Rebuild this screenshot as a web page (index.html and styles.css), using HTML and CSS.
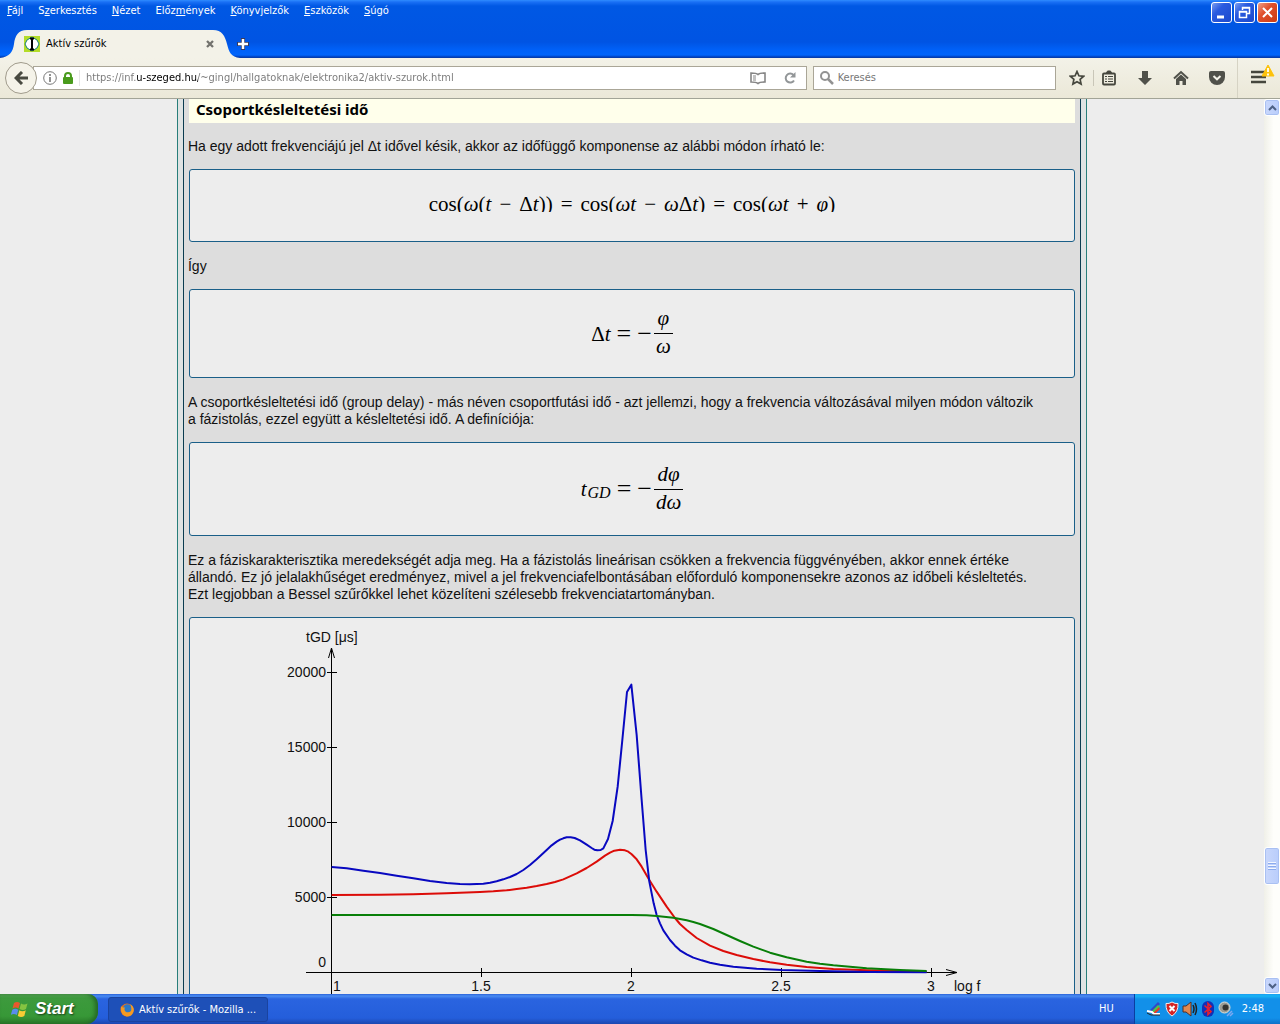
FILE: index.html
```html
<!DOCTYPE html>
<html lang="hu">
<head>
<meta charset="utf-8">
<title>Aktív szűrők</title>
<link rel="stylesheet" href="styles.css">
</head>
<body>
<header class="titlebar">
  <div class="title-row">
    <nav class="menu">
      <button><u>F</u>ájl</button><button>S<u>z</u>erkesztés</button><button><u>N</u>ézet</button><button>Előz<u>m</u>ények</button><button><u>K</u>önyvjelzők</button><button><u>E</u>szközök</button><button><u>S</u>úgó</button>
    </nav>
    <div class="window-buttons">
      <button class="win" aria-label="Kis méret"><svg width="19" height="19"><path d="M5 14h7" stroke="#fff" stroke-width="3"/></svg></button>
      <button class="win" aria-label="Előző méret"><svg width="19" height="19" fill="none" stroke="#fff"><path d="M7.500 7V4.500h7v6H12M7 5h8M4.500 8.500h7v6h-7zM4 9h8" stroke-width="1.500"/></svg></button>
      <button class="win win-close" aria-label="Bezárás"><svg width="19" height="19"><path d="M5 5l9 9M14 5l-9 9" stroke="#fff" stroke-width="2"/></svg></button>
    </div>
  </div>
  <div class="tabs">
    <div class="tab">
      <svg class="tab-shape" width="240" height="28" viewBox="0 0 240 28"><path d="M0 28C9 27 13 22 14 14S18 0 27 0H213C222 0 225 6 227 14S231 27 240 28Z" fill="#f3f2e8"/></svg>
      <svg class="favicon" width="16" height="16"><path fill="#b4dc28" d="M0 0h16v16H0z"/><path d="M8 1l5 3 2 4-2 4-5 3-5-3-2-4 2-4z" fill="#fff" stroke="#187f78"/><path d="M6 2.500h4M8 2v12M6 13.500h4" stroke="#000" stroke-width="2"/></svg>
      <span class="tab-title">Aktív szűrők</span>
      <button class="icon-button" aria-label="Lap bezárása"><svg width="8" height="8"><path d="M1 1l6 6M7 1L1 7" stroke="#72726d" stroke-width="2.300"/></svg></button>
    </div>
    <button class="icon-button new-tab" aria-label="Új lap"><svg width="12" height="12"><path d="M6 0v12M0 6h12" stroke="#383b5c" stroke-width="4"/><path d="M6 1v10M1 6h10" stroke="#fff" stroke-width="2.500"/></svg></button>
  </div>
</header>

<div class="toolbar">
  <button class="back" aria-label="Vissza"><svg width="14" height="14" fill="none" stroke="#494a41" stroke-width="3"><path d="M8 1L2 7l6 6M2 7h12"/></svg></button>
  <div class="url-box">
    <svg width="14" height="14"><circle cx="7" cy="7" r="6.300" fill="none" stroke="#777"/><path d="M7 3v2M7 6v5" stroke="#777" stroke-width="1.600"/></svg>
    <svg width="10" height="12"><path d="M2 6V4a3 3 0 016 0v2" fill="none" stroke="#4a9b1d" stroke-width="2"/><rect y="5" width="10" height="7" rx="1" fill="#4a9b1d"/></svg>
    <input class="url" aria-label="Webcím" value="https://inf.u-szeged.hu/~gingl/hallgatoknak/elektronika2/aktiv-szurok.html">
    <button class="icon-button" aria-label="Olvasó nézet"><svg width="16" height="13" fill="none" stroke="#858585" stroke-width="1.600"><path d="M8 2.500C6.500 1 4 1 1 1v9c3 0 5.500 0 7 1.500C9.500 10 12 10 15 10V1c-3 0-5.500 0-7 1.500z"/><path d="M3 4h3M3 6h3M3 8h3" stroke-width="1"/></svg></button>
    <button class="icon-button reload" aria-label="Frissítés"><svg width="12" height="12" fill="none" stroke="#929698" stroke-width="2"><path d="M10 8.500A4.500 4.500 0 119.500 3"/><path d="M11.500 0v5.500H6" fill="#929698" stroke="none"/></svg></button>
  </div>
  <label class="search-box">
    <svg width="14" height="14" fill="none" stroke="#929292" stroke-width="2"><circle cx="5" cy="5" r="4"/><path d="M8 8l5 5" stroke-width="2.500"/></svg>
    <input placeholder="Keresés" aria-label="Keresés">
  </label>
  <div class="tools">
    <button class="icon-button" aria-label="Könyvjelző"><svg width="16" height="16"><path d="M8 1.500l1.900 4.300 4.700.5-3.500 3.100 1 4.700L8 11.700l-4.100 2.400 1-4.700L1.400 6.300l4.700-.5z" fill="none" stroke="#46473e" stroke-width="1.700"/></svg></button>
    <button class="icon-button divided" aria-label="Könyvjelzők listája"><svg width="16" height="16" fill="none" stroke="#46473e"><rect x="2" y="3.500" width="12" height="11" rx="1" stroke-width="1.800"/><path d="M5.500 3L6.500 1h3l1 2z" fill="#46473e"/><path d="M4 6.500h2m1 0h5M4 9h2m1 0h5M4 11.500h2m1 0h5" stroke-width="1.200"/></svg></button>
    <button class="icon-button" aria-label="Letöltések"><svg width="16" height="16"><path d="M5 1h6v7h4l-7 7-7-7h4z" fill="#50514a"/></svg></button>
    <button class="icon-button" aria-label="Kezdőlap"><svg width="16" height="16"><path d="M1 8.500L8 2l7 6.500" fill="none" stroke="#50514a" stroke-width="2"/><path d="M3 9l5-4.500L13 9v6H9.500v-4h-3v4H3z" fill="#50514a"/></svg></button>
    <button class="icon-button" aria-label="Pocket"><svg width="16" height="16"><path d="M2 1h12q2 0 2 2v4a8 8 0 01-16 0V3q0-2 2-2z" fill="#50514a"/><path d="M4.500 6L8 9.300 11.500 6" fill="none" stroke="#f3f2e8" stroke-width="2"/></svg></button>
  </div>
  <button class="icon-button main-menu" aria-label="Menü"><svg width="28" height="22"><path d="M3 8h15M3 13h15M3 18h15" stroke="#46473e" stroke-width="2.600"/><path d="M20 1l6 11H14z" fill="#fdc20c" stroke="#fdc20c" stroke-linejoin="round"/><path d="M20 4v4M20 9.500v2" stroke="#fff" stroke-width="1.800"/></svg></button>
</div>

<div class="viewport">
  <main class="document">
    <div class="frame">
    <article class="sheet">
      <h2>Csoportkésleltetési idő</h2>
      <p>Ha egy adott frekvenciájú jel Δt idővel késik, akkor az időfüggő komponense az alábbi módon írható le:</p>
      <div class="box formula formula-line"><div class="math clipped">cos(<i>ω</i>(<i>t</i><b>−</b>Δ<i>t</i>))<b>=</b>cos(<i>ωt</i><b>−</b><i>ω</i>Δ<i>t</i>)<b>=</b>cos(<i>ωt</i><b>+</b><i>φ</i>)</div></div>
      <p>Így</p>
      <div class="box formula formula-short"><div class="math">Δ<i>t</i><b>=</b><b class="sign">−</b><span class="fraction"><i>φ</i><i>ω</i></span></div></div>
      <p>A csoportkésleltetési idő (group delay) - más néven csoportfutási idő - azt jellemzi, hogy a frekvencia változásával milyen módon változik<br>a fázistolás, ezzel együtt a késleltetési idő. A definíciója:</p>
      <div class="box formula formula-tall"><div class="math"><i>t</i><sub>GD</sub><b>=</b><b class="sign">−</b><span class="fraction"><i>dφ</i><i>dω</i></span></div></div>
      <p>Ez a fáziskarakterisztika meredekségét adja meg. Ha a fázistolás lineárisan csökken a frekvencia függvényében, akkor ennek értéke<br>állandó. Ez jó jelalakhűséget eredményez, mivel a jel frekvenciafelbontásában előforduló komponensekre azonos az időbeli késleltetés.<br>Ezt legjobban a Bessel szűrőkkel lehet közelíteni szélesebb frekvenciatartományban.</p>
      <div class="box chart">
        <svg width="700" height="400" viewBox="282 618 700 400" role="img" aria-label="Csoportkésleltetési idő a frekvencia függvényében">
          <path class="axis" d="M331.500 1010V648M328.500 658l3-10 3 10M306 972.500H957M946 969.500l11 3-11 3M327 672.500h10M327 747.500h10M327 822.500h10M327 897.500h10M481.500 968v9M631.500 968v9M781.500 968v9M931.500 968v9"/>
          <g class="labels">
            <text x="306" y="642">tGD [μs]</text>
            <g text-anchor="end"><text x="326" y="677">20000</text><text x="326" y="752">15000</text><text x="326" y="827">10000</text><text x="326" y="902">5000</text><text x="326" y="967">0</text></g>
            <text x="333" y="991">1</text>
            <g text-anchor="middle"><text x="481" y="991">1.5</text><text x="631" y="991">2</text><text x="781" y="991">2.5</text><text x="931" y="991">3</text></g>
            <text x="954" y="991">log f</text>
          </g>
          <g class="curves" transform="translate(280 620) scale(.33333)">
            <polyline stroke="#dc0c08" points="155,825 300,824 400,823 500,820 600,816 640,814 680,811 710,807 740,803 770,798 800,792 825,786 850,778 890,760 920,744 950,725 975,707 990,698 1003,692 1020,689 1035,691 1045,695 1055,703 1070,718 1085,740 1108,780 1130,815 1160,860 1185,894 1200,912 1220,930 1250,954 1290,977 1330,993 1370,1005 1420,1017 1470,1027 1520,1034 1580,1041 1660,1047 1760,1051 1940,1055"/>
            <polyline stroke="#0808c0" points="155,741 200,745 250,752 300,759 350,767 400,775 450,783 500,789 540,792 570,793 610,791 630,788 650,784 670,778 690,771 710,762 730,750 750,735 770,718 800,690 815,676 830,665 840,659 850,655 860,652 872,652 884,654 900,661 920,674 935,684 943,689 952,691 962,690 970,685 984,657 998,603 1013,500 1027,360 1041,216 1054,194 1070,345 1085,540 1097,690 1108,785 1121,850 1130,885 1140,910 1150,931 1170,960 1185,977 1200,991 1220,1003 1240,1013 1265,1021 1290,1028 1320,1034 1360,1040 1430,1046 1505,1050 1620,1053 1770,1056 1940,1057"/>
            <polyline stroke="#087f08" points="155,885 1055,885 1100,886 1130,888 1180,893 1220,901 1240,906 1260,912 1300,927 1340,945 1380,963 1420,980 1470,998 1520,1012 1580,1025 1620,1031 1660,1036 1760,1045 1860,1050 1940,1053"/>
          </g>
        </svg>
      </div>
    </article>
    </div>
  </main>
  <div class="scrollbar">
    <button class="scroll-part" aria-label="Fel"><svg width="9" height="6"><path d="M1 5l3.500-3.500L8 5" fill="none" stroke="#4d6185" stroke-width="2"/></svg></button>
    <span class="space-before"></span>
    <div class="scroll-part thumb"><svg width="8" height="9"><path d="M0 .5h8M0 3.500h8M0 6.500h8" stroke="#f4f7ff"/><path d="M0 1.500h8M0 4.500h8M0 7.500h8" stroke="#8cabee"/></svg></div>
    <span class="space-after"></span>
    <button class="scroll-part" aria-label="Le"><svg width="9" height="6"><path d="M1 1l3.500 3.500L8 1" fill="none" stroke="#4d6185" stroke-width="2"/></svg></button>
  </div>
</div>

<footer class="taskbar">
  <button class="start">
    <svg width="18" height="18"><path d="M3 3q3-2 6 0L7.500 8.500q-3-2-6 0z" fill="#e8582d"/><path d="M10 3.500q3 2 6.500 0L15 9q-3 2-6.500 0z" fill="#86c441"/><path d="M1.300 9.800q3-2 6 0L5.800 15q-3-2-6 0z" fill="#5a8cec"/><path d="M8.300 10.300q3 2 6.500 0L13.300 16q-3 2-6.500 0z" fill="#f8cc35"/></svg>
    Start
  </button>
  <button class="task">
    <svg width="14" height="14"><circle cx="7" cy="7" r="6.500" fill="#e8701a"/><circle cx="7.500" cy="5.800" r="4.500" fill="#2c79c8"/><path d="M1 3q1 2 4 1.500Q3.500 7 6 9q3 1 5-1 1-4-1-7 5 3 3.500 8-2 5-7 4.500Q0 12 1 3z" fill="#f59a22"/></svg>
    Aktív szűrők - Mozilla ...
  </button>
  <span class="language">HU</span>
  <div class="tray">
    <svg width="16" height="16"><path d="M3 10L12 1l2 2-8 8z" fill="#3048c8"/><path d="M5 11l7-7 2 2-6 6z" fill="#48c848"/><path d="M7 12l6-6 1 2-5 5z" fill="#e83828"/><path d="M1 10l5 1 2 2h6" stroke="#fff" stroke-width="2" fill="none"/><path d="M1 12l4 2h9" stroke="#222" fill="none"/></svg>
    <svg width="14" height="16"><path d="M7 1q3 2 6 1.500Q13.500 11 7 15 .5 11 1 2.500 4 3 7 1z" fill="#d52424" stroke="#eee"/><path d="M4.500 5l5 5M9.500 5l-5 5" stroke="#fff" stroke-width="2"/></svg>
    <svg width="16" height="16"><path d="M1 5h3l5-4v14l-5-4H1z" fill="#e08850" stroke="#503028"/><path d="M11 4q2 4 0 8M13 2q3 6 0 12" fill="none" stroke="#222" stroke-width="1.500"/></svg>
    <svg width="14" height="16"><rect x="1" width="12" height="16" rx="6" fill="#1030b8"/><path d="M3.500 4.500l6.500 6-3 3v-11l3 3-6.500 6" fill="none" stroke="#e8202c" stroke-width="1.600"/></svg>
    <svg width="16" height="16"><circle cx="6.500" cy="6.500" r="5.500" fill="#9b9b92" stroke="#e0e0d8"/><circle cx="7.500" cy="6.500" r="3" fill="#33332f"/><path d="M9 15l5-5M12 15l3-3" stroke="#7fa9f0" stroke-width="1.500"/></svg>
    <time>2:48</time>
  </div>
</footer>
</body>
</html>
```
FILE: styles.css
```css
* { box-sizing: border-box; }

body {
  margin: 0;
  height: 100vh;
  display: flex;
  flex-direction: column;
  overflow: hidden;
  background: #ededed;
  font: 11px/16px "DejaVu Sans Condensed", "DejaVu Sans", sans-serif;
}

button, input { font: inherit; color: inherit; border: 0; padding: 0; background: none; }
button { display: flex; align-items: center; }
svg { display: block; flex: none; }

.titlebar {
  flex: none;
  height: 58px;
  color: #fff;
  background: linear-gradient(#2f8cff 0, #1a70f5 2px, #0058e4 6px, #0054e3 42px, #0061f8 50px, #0165fb 55px, #0040bd 57px, #0a3aa0 58px);
}
.title-row { display: flex; justify-content: space-between; height: 30px; }
.menu { display: flex; gap: 15px; height: 20px; padding: 1px 0 0 7px; }
.menu button { display: block; }
.window-buttons { display: flex; gap: 2px; padding: 2px 2px 0 0; }
.win {
  width: 21px;
  height: 21px;
  border: 1px solid #fff;
  border-radius: 3px;
  background: linear-gradient(135deg, #7a9df0, #2a5be0 35%, #1c49cc);
}
.win-close { background: linear-gradient(135deg, #f0a088, #e0502c 40%, #cc3b14); }

.tabs { display: flex; height: 28px; align-items: center; }
.tab {
  position: relative;
  display: flex;
  align-items: center;
  width: 235px;
  height: 28px;
  padding: 0 21px 0 24px;
  color: #000;
}
.tab > * { position: relative; }
.tab .tab-shape { position: absolute; left: 0; top: 0; }
.tab-title { flex: 1; margin-left: 6px; }
.new-tab { margin-left: 2px; }
.icon-button { flex: none; }

.toolbar {
  flex: none;
  display: flex;
  align-items: center;
  height: 41px;
  padding-left: 5px;
  background: linear-gradient(#f3f2e8, #ebe8d8);
  border-bottom: 1px solid #a2a497;
}
.back {
  flex: none;
  width: 32px;
  height: 32px;
  justify-content: center;
  border: 1px solid #a09b8c;
  border-radius: 50%;
  background: #f5f3e9;
  z-index: 1;
}
.url-box, .search-box {
  display: flex;
  align-items: center;
  height: 24px;
  border: 1px solid #aaa697;
  background: #fff;
}
.url-box { flex: 774; margin-left: -4px; padding: 0 10px 0 9px; gap: 6px; }
.url {
  flex: 1;
  min-width: 0;
  padding-left: 6px;
  border-left: 1px solid #e6e6e6;
  color: transparent;
  background: linear-gradient(90deg, #777 57px, #000 57px, #000 118px, #777 118px);
  -webkit-background-clip: text;
  background-clip: text;
}
.reload { margin-left: 12px; }
.search-box { flex: 242; margin-left: 6px; padding-left: 6px; gap: 4px; }
.search-box input { flex: 1; min-width: 0; outline: 0; }
.search-box input::placeholder { color: #777; opacity: 1; }
.tools { display: flex; gap: 20px; padding: 0 12px 0 13px; }
.tools .divided { margin-left: -12px; padding-left: 7px; border-left: 1px solid #c9c6b8; }
.main-menu { height: 40px; width: 43px; padding: 0 0 6px 10px; border-left: 1px solid #d6d3c4; }

.viewport { flex: 1; min-height: 0; display: flex; overflow: hidden; }
.document { flex: 1; min-width: 0; }
.frame {
  width: 72%;
  margin: 0 auto;
  padding: 0 5px;
  background: #dfe3e3;
  border: solid #287e7a;
  border-width: 0 1px;
}
.sheet {
  padding: 0 4px;
  background: #ddd;
  border: solid #0b3c50;
  border-width: 0 1px;
}
h2 {
  margin: 0 1px 15px;
  padding: 0 7px 3px;
  background: #ffffeb;
  font: bold 15px/21px "Noto Sans", sans-serif;
}
p { margin: 0; font: 14px/17px "Liberation Sans", Arial, sans-serif; color: #111; }
.box { margin: 14px 1px 16px; border: 1px solid #1a5f88; border-radius: 3px; background: #ededed; }
.formula { display: flex; justify-content: center; align-items: center; }
.formula-line { height: 73px; padding-bottom: 7px; }
.formula-short { height: 89px; }
.formula-tall { height: 94px; }
.math { display: flex; align-items: center; white-space: pre; font: 21px/24px "Liberation Serif", "Times New Roman", serif; color: #000; }
.math b { font-weight: normal; font-size: 26px; line-height: 0; margin: 0 6px; }
.math .sign { margin: 0 2px 0 0; }
.math sub { font-size: 16px; font-style: italic; line-height: 16px; margin: 8px 0 0 1px; vertical-align: baseline; }
.math.clipped { display: block; height: 20px; overflow: hidden; }
.clipped b { font-size: 21px; margin: 0 8px; }
.fraction { display: flex; flex-direction: column; align-items: center; }
.fraction i { padding: 0 2px 3px; }
.fraction i + i { border-top: 1px solid #000; }
.chart { display: flex; justify-content: center; margin-bottom: 0; }
.axis { fill: none; stroke: #000; }
.labels { font: 14px "Liberation Sans", Arial, sans-serif; fill: #111; }
.curves { fill: none; stroke-width: 6; stroke-linejoin: round; }

.scrollbar {
  flex: none;
  width: 16px;
  display: flex;
  flex-direction: column;
  background: linear-gradient(90deg, #f0f0e8, #fefefb 60%);
}
.scroll-part {
  display: flex;
  align-items: center;
  justify-content: center;
  height: 17px;
  border: 1px solid #fff;
  border-radius: 3px;
  background: linear-gradient(90deg, #c9d7fc, #b9cdfb);
  box-shadow: inset 0 0 0 1px #a9c0f2;
}
.thumb { height: 38px; }
.space-before { flex: 731; }
.space-after { flex: 92; }

.taskbar {
  flex: none;
  display: flex;
  height: 30px;
  color: #fff;
  background: linear-gradient(#2a62d8, #4a8cf2 2px, #2a64e0 5px, #245edb 24px, #1b47b0);
}
.start {
  width: 98px;
  gap: 6px;
  padding-left: 11px;
  border-radius: 0 10px 12px 0;
  background: linear-gradient(#5cae5c, #3d9a3d 4px, #379837 22px, #2a7a2a);
  box-shadow: inset -3px 0 4px #256825;
  font: italic bold 17px/24px "Liberation Sans", Arial, sans-serif;
  text-shadow: 1px 1px 2px #163b16;
}
.task {
  width: 160px;
  height: 25px;
  margin: 3px 0 0 10px;
  padding-left: 11px;
  gap: 5px;
  border: 1px solid #1a439f;
  border-radius: 3px;
  background: #1e50b8;
}
.language { margin-left: auto; padding: 7px 20px 0 0; }
.tray {
  display: flex;
  align-items: center;
  gap: 3px;
  padding: 0 16px 0 11px;
  border-left: 1px solid #0b3ea0;
  background: linear-gradient(#1a9cf0, #18b5f5 2px, #1290e9 5px, #1290e9 24px, #0d70c8);
}
.tray time { margin-left: 5px; }
```
